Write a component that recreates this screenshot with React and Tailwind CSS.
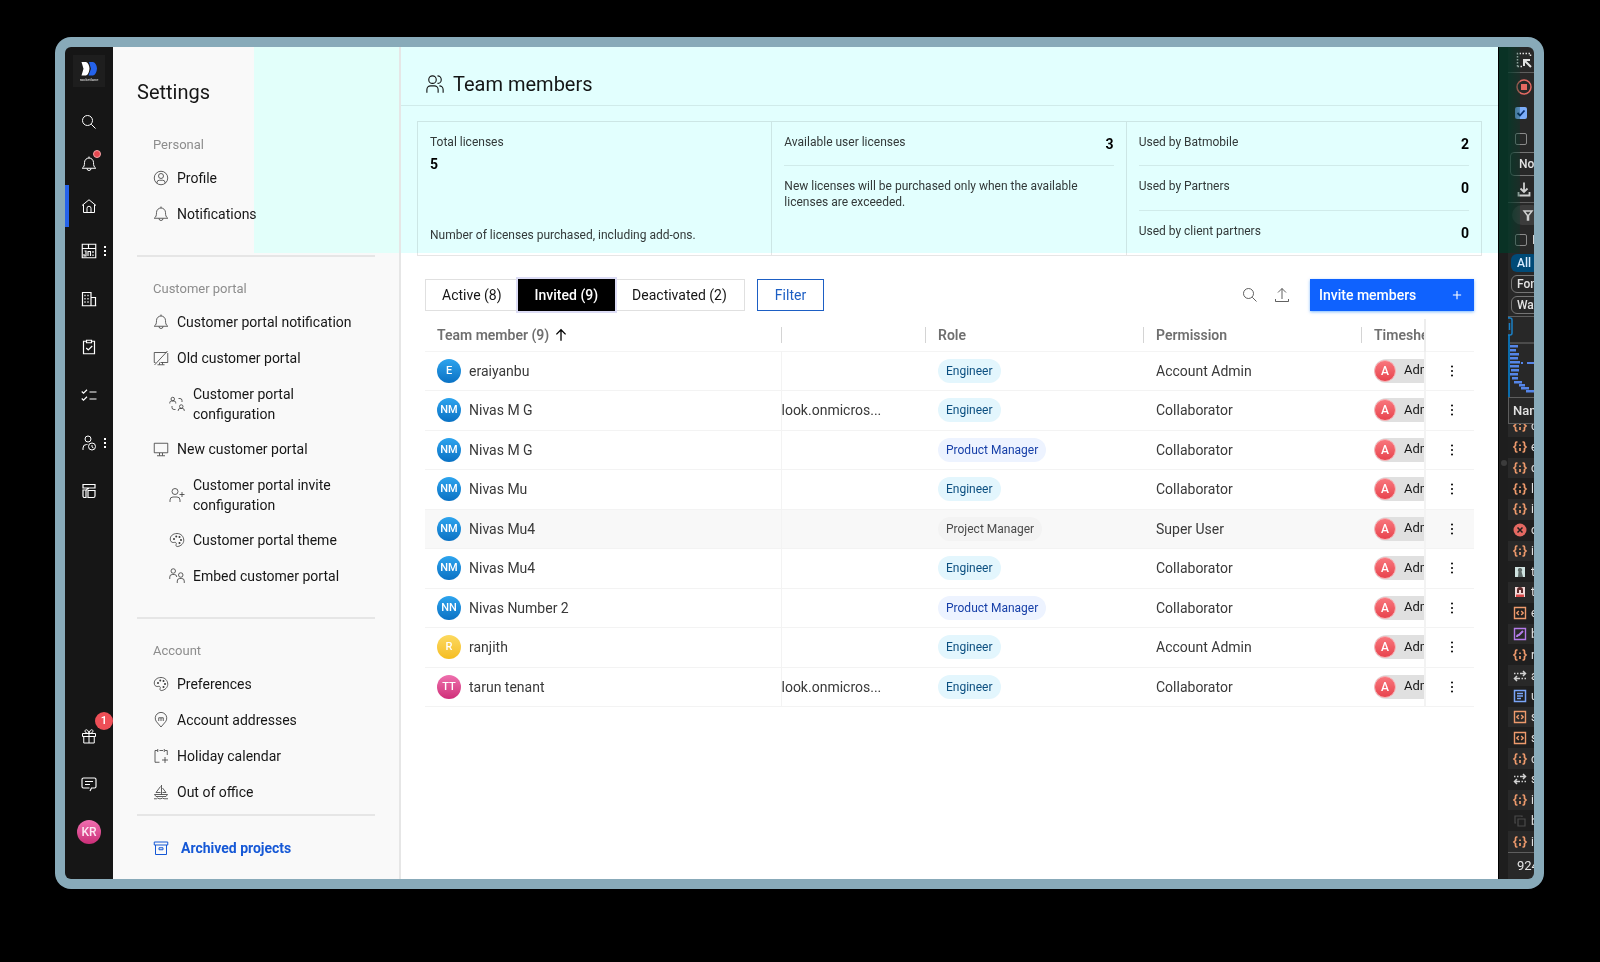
import React from "react";

/* Line icons on a 32-unit grid */
const ICONS = {
  search: <><circle cx="13" cy="13" r="10" /><path d="M20.5 20.5 29 29" /></>,
  bell: <path d="M2.500 24.500h27C26 22 25 19 25 13a9 9 0 0 0-18 0c0 6-1 9-4.500 11.500ZM12 25a4 4 0 0 0 8 0M16 1v3" />,
  home: <path d="M5 13v16h22V13M2 15 16 3.500 30 15M12 29v-8.500a4 4 0 0 1 8 0V29" />,
  dashboard: <path d="M2.500 2.500h27v27h-27ZM2.500 11h27M15 3v8M7 16h3v10H6v-4M14 26v-9h5v9M24 16v4M24 23v3" strokeWidth="2.300" />,
  building: <path d="M3 30V3h17v27M20 13h9v17M1.500 29.500h29M8 7.500v3M14 7.500v3M8 14v3M14 14v3M8 20.500v3M14 20.500v3" strokeWidth="2.400" />,
  clipboard: <path d="M11 4.500H5v25h22v-25h-6M11 2.500h10v5H11ZM10.500 18l4 4 8-8" strokeWidth="2.400" />,
  tasks: <path d="M1.500 9 5 12.500 12 5.500M1.500 23 5 26.500l7-7M17 10h14M17 24h14" strokeWidth="2.300" />,
  userTime: <><circle cx="14" cy="8" r="6" /><path d="M4 30v-4a7 7 0 0 1 7-7h2M22 20v4l3 2" /><circle cx="22" cy="23" r="7" /></>,
  template: <path d="M4 3h24v7H4ZM4 14h6v15H7a3 3 0 0 1-3-3ZM14 15h14v11a3 3 0 0 1-3 3H14ZM10 15q2-4 6-4" strokeWidth="2.400" />,
  gift: <path d="M3 11h26v6H3ZM5.500 17v13h21V17M16 11v19M16 11c-5 0-8-2-8-5s6-5 8 5c2-10 8-8 8-5s-3 5-8 5Z" />,
  chat: <path d="M18 30l3-6h6a3 3 0 0 0 3-3V7a3 3 0 0 0-3-3H5a3 3 0 0 0-3 3v14a3 3 0 0 0 3 3h12M8 11h16M8 17h10" strokeWidth="2.300" />,
  profile: <><circle cx="16" cy="16" r="13.500" /><circle cx="16" cy="12" r="5" /><path d="M8 26.500V25a4.500 4.500 0 0 1 4.500-4.500h7A4.500 4.500 0 0 1 24 25v1.500" /></>,
  screenOff: <path d="M27 5H2.500v20H5M15 25h14.500V6M29 2 3 30M13 25v4M19 25v4M9 29.500h14" />,
  screen: <path d="M2.500 4.500h27v19h-27ZM13 24v5M19 24v5M8 29.500h16" />,
  swapUsers: <path d="M7.500 2.500a3.500 3.500 0 1 1 0 7 3.500 3.500 0 0 1 0-7M1.500 15v-1.500A3.500 3.500 0 0 1 5 10h5a3.500 3.500 0 0 1 3.500 3.500V15M24.500 17.500a3.500 3.500 0 1 1 0 7 3.500 3.500 0 0 1 0-7M18.500 30v-1.500A3.500 3.500 0 0 1 22 25h5a3.500 3.500 0 0 1 3.500 3.500V30M19 5h3a4 4 0 0 1 4 4v3M13 27h-3a4 4 0 0 1-4-4v-3" />,
  userAdd: <><circle cx="12" cy="9" r="6" /><path d="M2 30v-4a6 6 0 0 1 6-6h8a6 6 0 0 1 6 6v4M21 15h10M26 10v10" /></>,
  palette: <><path d="M16 3C8 3 2.500 8 2.500 14c0 5 3 7 6 7 2.500 0 4-1 5.500.500s0 3 0 5 1.500 3 3.500 2.500C24 28 29.500 23 29.500 16.500 29.500 9 24 3 16 3Z" /><g fill="currentColor" stroke="none"><circle cx="10" cy="14" r="2" /><circle cx="14.500" cy="9" r="2" /><circle cx="21" cy="10" r="2" /><circle cx="24" cy="16" r="2" /><circle cx="21" cy="22" r="2" /></g></>,
  twoUsers: <><circle cx="8.500" cy="6" r="4.500" /><circle cx="23.500" cy="14" r="4.500" /><path d="M1.500 22v-4a5 5 0 0 1 5-5h4a5 5 0 0 1 5 5M16.500 30v-4a5 5 0 0 1 5-5h4a5 5 0 0 1 5 5v4" /></>,
  pin: <path d="M16 30 7 19.500a11.500 11.500 0 1 1 18 0ZM11.500 18v-6.500h9V18M16 12v6" />,
  calendarAdd: <path d="M13 28.500H4V5h5M13 5h7M24 5h4.500v9M9.500 2v6M22.500 2v6M24 18v12M18 24h12" />,
  boat: <path d="M2 29.500h5l2-1.500 3 1.500h4l3-1.500 3 1.500h8M3 21h26l-3 4H6ZM17 2v19M15 5 6 17h9M19 8l7 9h-7" />,
  archive: <path d="M2.500 4h27v6h-27ZM5 10v19h22V10M12 15.500h8v4h-8Z" />,
  team: <><circle cx="12" cy="9" r="6" /><path d="M3 30v-5a6 6 0 0 1 6-6h6a6 6 0 0 1 6 6v5M20 3a6 6 0 0 1 0 12M23 19a6 6 0 0 1 6 6v5" /></>,
  upload: <path d="M3 24v5h26v-5M16 24V3M8 11l8-8 8 8" />,
  plus: <path d="M16 5v22M5 16h22" />,
  arrowUp: <path d="M16 29V4M5.500 14.500 16 4l10.500 10.500" />,
  kebab: <g fill="currentColor" stroke="none"><circle cx="16" cy="7" r="2" /><circle cx="16" cy="16" r="2" /><circle cx="16" cy="25" r="2" /></g>,
};

function Icon({ name, className = "size-4", stroke = 2 }) {
  return (
    <svg viewBox="0 0 32 32" fill="none" stroke="currentColor" strokeWidth={stroke} className={`shrink-0 ${className}`} aria-hidden="true">
      {ICONS[name]}
    </svg>
  );
}

function RailDots() {
  return (
    <svg viewBox="0 0 4 12" className="absolute top-1/2 right-[6px] h-3 w-1 -translate-y-1/2 fill-white" aria-hidden="true">
      <rect x="1" y="1" width="2" height="2" /><rect x="1" y="5" width="2" height="2" /><rect x="1" y="9" width="2" height="2" />
    </svg>
  );
}

const RAIL_TOP = [
  { icon: "search", label: "Search" },
  { icon: "bell", label: "Alerts", dot: true },
  { icon: "home", label: "Home", active: true },
];
const RAIL_MID = [
  { icon: "dashboard", label: "Dashboards", more: true },
  { icon: "building", label: "Accounts" },
  { icon: "clipboard", label: "Projects" },
  { icon: "tasks", label: "Tasks" },
  { icon: "userTime", label: "People", more: true },
  { icon: "template", label: "Templates" },
];

function Rail() {
  return (
    <nav className="flex w-12 shrink-0 flex-col bg-[#161616] pt-2 text-white">
      <a href="#" className="mx-auto flex size-8 items-center justify-center bg-[#1e1e1e]">
        <svg viewBox="0 0 32 32" className="size-8" role="img" aria-label="rocketlane">
          <path d="M8.500 7H13q3 1 3.500 6.500Q16 19.500 13 20.500H8.500l2-6.750Z" fill="#fff" />
          <path d="M16 7h4q3.500 1 4 6.500-.5 6-4 7h-4.500l2.500-6.750Z" fill="#2563eb" />
          <text x="16" y="26" fontSize="4" textAnchor="middle" fill="#e5e5e5">rocketlane</text>
        </svg>
      </a>
      <div className="mt-[14px] flex flex-col">
        {RAIL_TOP.map((i) => (
          <button key={i.icon} aria-label={i.label} className={`flex h-[42px] items-center justify-center border-l-4 pr-1 ${i.active ? "border-[#2563eb]" : "border-transparent"}`}>
            <span className="relative">
              <Icon name={i.icon} />
              {i.dot && <span className="absolute -top-[6px] -right-1 size-2 rounded-full border border-[#f2a3a8] bg-[#e5484f]" />}
            </span>
          </button>
        ))}
      </div>
      <div className="flex flex-col">
        {RAIL_MID.map((i) => (
          <button key={i.icon} aria-label={i.label} className="relative flex h-12 items-center justify-center">
            <Icon name={i.icon} />
            {i.more && <RailDots />}
          </button>
        ))}
      </div>
      <div className="mt-auto flex flex-col pb-[23px]">
        <button aria-label="What's new" className="relative flex h-12 items-center justify-center">
          <Icon name="gift" />
          <span className="absolute top-0 right-0 flex size-[18px] items-center justify-center rounded-full bg-[#ee4f57] text-[11px] font-semibold">1</span>
        </button>
        <button aria-label="Messages" className="flex h-12 items-center justify-center"><Icon name="chat" /></button>
        <button className="flex h-12 items-center justify-center">
          <span className="flex size-6 items-center justify-center rounded-full bg-linear-to-b from-[#f06db0] to-[#cb2d78] text-xs font-medium text-[#fde8f2]">KR</span>
        </button>
      </div>
    </nav>
  );
}

function NavItem({ icon, label, sub, tall }) {
  return (
    <a href="#" className={`flex items-center gap-2 leading-5 text-[#161616] ${sub ? "pl-14" : "pl-10"} ${tall ? "h-[55px]" : "h-9"}`}>
      <Icon name={icon} stroke={1.600} className="size-4 text-[#393939]" />
      <span className={tall ? "w-[150px]" : ""}>{label}</span>
    </a>
  );
}

function NavGroup({ title, children }) {
  return (
    <>
      <h2 className="mb-[5px] pl-10 text-[13px] leading-5 text-[#8d8d8d]">{title}</h2>
      {children}
    </>
  );
}

const Divider = ({ className }) => <hr className={`mx-6 border-t-2 border-[#e6e6e6] ${className}`} />;

function Sidebar() {
  return (
    <aside className="relative isolate flex w-72 shrink-0 flex-col border-r-2 border-[#e6e6e6] bg-[#f9f9f9] pt-[33px] text-sm">
      <span className="absolute top-0 right-0 left-[141px] -z-10 h-[206px] bg-[#e2fffa]" />
      <h1 className="pl-6 text-xl leading-6 text-[#161616]">Settings</h1>
      <div className="pt-[31px]">
        <NavGroup title="Personal">
          <NavItem icon="profile" label="Profile" />
          <NavItem icon="bell" label="Notifications" />
        </NavGroup>
      </div>
      <Divider className="mt-[23px] mb-[22px]" />
      <NavGroup title="Customer portal">
        <NavItem icon="bell" label="Customer portal notification" />
        <NavItem icon="screenOff" label="Old customer portal" />
        <NavItem icon="swapUsers" label="Customer portal configuration" sub tall />
        <NavItem icon="screen" label="New customer portal" />
        <NavItem icon="userAdd" label="Customer portal invite configuration" sub tall />
        <NavItem icon="palette" label="Customer portal theme" sub />
        <NavItem icon="twoUsers" label="Embed customer portal" sub />
      </NavGroup>
      <Divider className="mt-[23px] mb-[22px]" />
      <NavGroup title="Account">
        <NavItem icon="palette" label="Preferences" />
        <NavItem icon="pin" label="Account addresses" />
        <NavItem icon="calendarAdd" label="Holiday calendar" />
        <NavItem icon="boat" label="Out of office" />
      </NavGroup>
      <Divider className="mt-1 mb-[22px]" />
      <a href="#" className="flex items-center gap-3 pl-10 leading-5 font-bold text-[#1558d6]">
        <Icon name="archive" /> Archived projects
      </a>
    </aside>
  );
}

function StatRow({ label, value, last }) {
  return (
    <div className={`flex items-center justify-between ${last ? "" : "border-b border-[#ebebeb]"}`}>
      <span className="pb-1 text-[#393939]">{label}</span>
      <strong className="text-sm font-bold text-black">{value}</strong>
    </div>
  );
}

function Stats() {
  return (
    <section className="mx-4 mt-[15px] grid h-[135px] grid-cols-3 divide-x divide-[#e6e6e6] border border-[#e6e6e6] text-xs">
      <div className="flex flex-col px-3 pt-3 pb-3 text-[#393939]">
        <span className="leading-4">Total licenses</span>
        <strong className="mt-1 text-sm leading-5 font-bold text-black">5</strong>
        <span className="mt-auto leading-4">Number of licenses purchased, including add-ons.</span>
      </div>
      <div className="grid grid-rows-3 px-3">
        <StatRow label="Available user licenses" value="3" />
        <p className="row-span-2 max-w-[310px] pt-3 leading-4 text-[#393939]">New licenses will be purchased only when the available licenses are exceeded.</p>
      </div>
      <div className="grid grid-rows-3 px-3">
        <StatRow label="Used by Batmobile" value="2" />
        <StatRow label="Used by Partners" value="0" />
        <StatRow label="Used by client partners" value="0" last />
      </div>
    </section>
  );
}

const BLUE = "from-[#2da4ee] to-[#0a72c4]";
const MEMBERS = [
  ["E", BLUE, "eraiyanbu", "", "Engineer", "Account Admin"],
  ["NM", BLUE, "Nivas M G", "look.onmicros...", "Engineer", "Collaborator"],
  ["NM", BLUE, "Nivas M G", "", "Product Manager", "Collaborator"],
  ["NM", BLUE, "Nivas Mu", "", "Engineer", "Collaborator"],
  ["NM", BLUE, "Nivas Mu4", "", "Project Manager", "Super User"],
  ["NM", BLUE, "Nivas Mu4", "", "Engineer", "Collaborator"],
  ["NN", BLUE, "Nivas Number 2", "", "Product Manager", "Collaborator"],
  ["R", "from-[#fcd95e] to-[#f5bd1c]", "ranjith", "", "Engineer", "Account Admin"],
  ["TT", "from-[#ee6fae] to-[#cf2c79]", "tarun tenant", "look.onmicros...", "Engineer", "Collaborator"],
];
const ROLE_STYLE = {
  Engineer: "bg-[#e3f6fd] text-[#0b4f80]",
  "Product Manager": "bg-[#edf3ff] text-[#163fa8]",
  "Project Manager": "bg-[#f3f3f3] text-[#4a4a4a]",
};

function HeadCell({ children, bar = true }) {
  return (
    <th className="h-8 p-0 text-left font-semibold text-[#6f6f6f]">
      <div className={`h-4 overflow-hidden pl-3 leading-4 whitespace-nowrap ${bar ? "border-l border-[#d4d4d4]" : ""}`}>{children}</div>
    </th>
  );
}

function Members() {
  return (
    <div className="mx-6 mt-2">
      <table className="h-[388px] w-full table-fixed border-collapse text-sm text-[#393939]">
        <colgroup>
          <col /><col className="w-36" /><col className="w-[218px]" /><col className="w-[218px]" /><col className="w-16" /><col className="w-[49px]" />
        </colgroup>
        <thead>
          <tr className="h-8 border-b border-[#f4f4f4]">
            <HeadCell bar={false}>
              <button className="flex items-center gap-1 leading-4">Team member (9) <Icon name="arrowUp" stroke={3} className="size-4 p-px text-black" /></button>
            </HeadCell>
            <HeadCell /><HeadCell>Role</HeadCell><HeadCell>Permission</HeadCell><HeadCell>Timesheet</HeadCell>
            <th className="border-l-2 border-[#ededed]" aria-label="Actions" />
          </tr>
        </thead>
        <tbody>
          {MEMBERS.map(([initials, tone, name, email, role, permission], i) => (
            <tr key={i} className={`h-[39px] border-b border-[#f3f3f3] ${role === "Project Manager" ? "bg-[#f8f8f8]" : ""}`}>
              <td className="p-0 pl-3">
                <span className="flex items-center gap-2">
                  <span className={`flex size-6 items-center justify-center rounded-full bg-linear-to-b text-[11px] font-medium text-white ${tone}`}>{initials}</span>
                  {name}
                </span>
              </td>
              <td className="border-l border-[#f3f3f3] p-0">{email}</td>
              <td className="p-0 pl-[13px]">
                <span className={`inline-block h-6 rounded-full px-2 align-middle text-xs leading-6 ${ROLE_STYLE[role]}`}>{role}</span>
              </td>
              <td className="p-0 pl-[13px]">{permission}</td>
              <td className="p-0 pl-[13px]">
                <span className="flex h-6 items-center gap-2 overflow-hidden rounded-l-full bg-[#e0e0e0] text-[13px] text-[#161616]">
                  <span className="flex size-[22px] shrink-0 items-center justify-center rounded-full border border-[#f6b5b8] bg-linear-to-b from-[#f8757c] to-[#e8434e] text-xs font-medium text-white">A</span>
                  Adm
                </span>
              </td>
              <td className="border-l-2 border-[#f3f3f3] p-0 pl-1">
                <button aria-label={`Actions for ${name}`} className="flex h-8 w-full items-center justify-center text-black">
                  <Icon name="kebab" />
                </button>
              </td>
            </tr>
          ))}
        </tbody>
      </table>
    </div>
  );
}

function Main() {
  return (
    <main className="relative min-w-0 flex-1 bg-white text-sm">
      <header className="flex h-[59px] items-center gap-2 border-b border-[#ebebeb] pt-[15px] pl-6 text-xl text-[#161616]">
        <Icon name="team" className="size-5" stroke={1.800} /> <h2>Team members</h2>
      </header>
      <Stats />
      <div className="mx-6 mt-[23px] flex items-center leading-5">
        <div className="flex h-8 border border-[#e0e0e0] text-[#161616]">
          <button className="px-4">Active (8)</button>
          <button className="-my-px bg-black px-[17px] font-medium text-white outline-2 outline-[#dcdcf5]">Invited (9)</button>
          <button className="px-[17px]">Deactivated (2)</button>
        </div>
        <button className="ml-3 h-8 border border-[#1d5fc4] px-[17px] text-[#1d5fc4]">Filter</button>
        <div className="ml-auto flex items-center gap-4 text-[#393939]">
          <button aria-label="Search members"><Icon name="search" stroke={1.600} /></button>
          <button aria-label="Export"><Icon name="upload" stroke={1.600} /></button>
          <button className="ml-1 flex h-8 w-[164px] items-center justify-between bg-[#0f62fe] px-[9px] font-medium text-white shadow-sm shadow-blue-300">
            Invite members <Icon name="plus" className="size-4 p-[2px]" stroke={3} />
          </button>
        </div>
      </div>
      <Members />
      <span className="pointer-events-none absolute inset-x-0 top-0 h-[206px] bg-[#e2fffe] mix-blend-multiply" />
    </main>
  );
}

/* Network panel glyphs on a 16-unit grid */
const GLYPHS = {
  js: <g stroke="#ee9a6c" strokeWidth="1.700"><path d="M5.500 3H4.500Q3.500 3 3.500 4.500V6.500L2 8l1.500 1.500v2Q3.500 13 4.500 13h1M10.500 3h1q1 0 1 1.500v2L14 8l-1.500 1.500v2q0 1.500-1 1.500h-1" /><path d="M8 5.500v1.600M8 9v3" /></g>,
  error: <><circle cx="8" cy="8" r="6.500" fill="#e46962" stroke="none" /><path d="m5.500 5.500 5 5m0-5-5 5" stroke="#1f1f1f" strokeWidth="1.500" /></>,
  photo: <><path d="M3 3h10v10H3Z" fill="#cfe3e0" stroke="none" /><path d="M8 4a2 2 0 0 1 1.500 3.500L11 13H6l.5-5.500A2 2 0 0 1 8 4Z" fill="#5f6b69" stroke="none" /></>,
  photoRed: <><path d="M3 3h10v10H3Z" fill="#f4d9d9" stroke="none" /><path d="M5 9V6a3 3 0 0 1 6 0v3H9V6H7v3Z" fill="#5b2b2b" stroke="none" /><path d="M4 10.500h8V13H4Z" fill="#d94a4a" stroke="none" /></>,
  code: <g stroke="#ee9a6c" strokeWidth="1.400"><path d="M2.500 2.500h11v11h-11Z" /><path d="m6.800 6-2 2 2 2M9.200 6l2 2-2 2" /></g>,
  style: <g stroke="#b57bea" strokeWidth="1.400"><path d="M2.500 2.500h11v11h-11Z" /><path d="M5 11q0-2 2-2l4-4" strokeWidth="2" /></g>,
  swap: <g stroke="#d0d0d0" strokeWidth="1.500"><path d="M2 5.500h1.500M5 5.500h1.500M8 5.500h5M11 3l2.500 2.500L11 8M14 10.500h-1.500M11 10.500H9.500M8 10.500H3M5 8l-2.500 2.500L5 13" /></g>,
  doc: <g stroke="#7aa5f7" strokeWidth="1.500"><path d="M2.500 2.500h11v11h-11Z" /><path d="M5 5.500h6M5 8h6M5 10.500h4" /></g>,
  copy: <g stroke="#4a4a4a" strokeWidth="1.200"><path d="M6 6h7v7H6ZM4 10H3V3h7v1" /></g>,
};
const REQUESTS = [
  ["js", "d"], ["js", "e"], ["js", "c"], ["js", "l"], ["js", "i"], ["error", "c"], ["js", "i"],
  ["photo", "t"], ["photoRed", "t"], ["code", "e"], ["style", "b"], ["js", "r"], ["swap", "a"], ["doc", "u"],
  ["code", "s"], ["code", "s"], ["js", "d"], ["swap", "s"], ["js", "i"], ["copy", "b"], ["js", "i"],
];
const BARS = [[2, 4, 8], [2, 8, 6], [2, 12, 9], [2, 16, 8], [2, 20, 10], [2, 24, 9], [3, 28, 8], [2, 32, 8], [4, 36, 6], [6, 40, 8], [11, 43, 6], [13, 46, 8], [18, 49, 8]];

function DevTools() {
  return (
    <>
      <div className="relative flex w-[10px] shrink-0 items-center justify-center border-l border-black bg-[#1e1e1e]">
        <span className="size-[6px] rounded-full bg-[#3c3c3c]" />
        <span className="absolute inset-x-0 top-0 h-[206px] bg-[#003a28]/70" />
      </div>
      <aside className="relative flex w-[26px] shrink-0 flex-col overflow-hidden bg-[#282828] text-xs whitespace-nowrap text-[#e3e3e3]">
        <div className="flex h-[26px] shrink-0 items-center border-b border-[#5e5e5e] pl-2">
          <svg viewBox="0 0 16 16" className="size-4 shrink-0" fill="none" stroke="#e3e3e3" strokeWidth="1.500" aria-hidden="true">
            <path d="M1.500 14.500v-13h13v4M1.500 14.500h5" strokeDasharray="1.500 1.500" /><path d="M15 15 8 8M8 14V8h6" strokeWidth="2" />
          </svg>
        </div>
        <button aria-label="Stop recording" className="flex h-[27px] shrink-0 items-center pl-2">
          <svg viewBox="0 0 16 16" className="size-4" aria-hidden="true"><circle cx="8" cy="8" r="7" fill="none" stroke="#e46962" strokeWidth="1.500" /><rect x="5" y="5" width="6" height="6" fill="#e46962" /></svg>
        </button>
        <label className="flex h-[26px] shrink-0 items-center pl-[7px]">
          <input type="checkbox" defaultChecked aria-label="Preserve log" className="absolute size-3 appearance-none rounded-xs bg-[#7cacf8]" />
          <svg viewBox="0 0 12 12" className="pointer-events-none relative size-3" fill="none" stroke="#062e6f" strokeWidth="1.800" aria-hidden="true"><path d="m2.500 6 2.500 2.500 4.500-5" /></svg>
        </label>
        <label className="flex h-[26px] shrink-0 items-center pl-[7px]"><input type="checkbox" aria-label="Disable cache" className="size-3 shrink-0 appearance-none rounded-xs border border-[#8a8a8a]" /></label>
        <button className="-mr-2 ml-[2px] h-6 shrink-0 rounded-sm border border-[#757575] pl-2 text-left font-medium">No throttling</button>
        <button aria-label="Export requests" className="flex h-[27px] shrink-0 items-center border-b border-[#5e5e5e] pl-2">
          <svg viewBox="0 0 16 16" className="size-4" fill="none" stroke="#d0d0d0" strokeWidth="1.800" aria-hidden="true"><path d="M8 1.500v9M4.500 7.500 8 11l3.500-3.500M2.500 11v3.500h11V11" /></svg>
        </button>
        <button aria-label="Filter requests" className="mt-[2px] -mr-2 ml-1 flex h-5 shrink-0 items-center rounded-full bg-[#3c3c3c] pl-[10px]">
          <svg viewBox="0 0 12 12" className="size-3" fill="none" stroke="#d0d0d0" strokeWidth="1.500" aria-hidden="true"><path d="M2 2h8L6.500 6.500V11h-1V6.500Z" /></svg>
        </button>
        <label className="flex h-[29px] shrink-0 items-center gap-[5px] pl-[7px]"><input type="checkbox" className="size-3 shrink-0 appearance-none rounded-xs border border-[#8a8a8a]" />Invert</label>
        <div className="flex shrink-0 flex-col gap-[3px] border-b border-[#5e5e5e] pb-[2px] pl-[3px] font-medium">
          <button className="-mr-1 h-[18px] rounded-md bg-[#004a77] pl-[6px] text-left leading-[18px] text-[#d8ecff]">All</button>
          <button className="-mr-2 h-[18px] rounded-md border border-[#757575] pl-[5px] text-left leading-4">Font</button>
          <button className="-mr-2 h-[18px] rounded-md border border-[#757575] pl-[5px] text-left leading-4">Wasm</button>
        </div>
        <svg viewBox="0 0 26 80" className="h-20 w-[26px] shrink-0 bg-[#282828]" aria-hidden="true">
          <path d="M0 26h26" stroke="#6e6e6e" />
          <path d="M1 0v80" stroke="#0b6cab" strokeWidth="2" />
          <rect x="-3" y="1" width="7" height="17" rx="2" fill="#282828" stroke="#1a7fc4" strokeWidth="1.500" />
          <path d="M1.500 6v7" stroke="#1a7fc4" strokeWidth="1.500" />
          {BARS.map(([x, y, w], i) => <rect key={i} x={x} y={y + 24} width={w} height="2.500" fill="#5585e8" />)}
          <path d="M13 46h2M19 46h7" stroke="#5585e8" strokeWidth="2" />
        </svg>
        <div className="flex h-[27px] shrink-0 items-center border-y border-l border-[#5e5e5e] pl-1 text-[13px] font-medium">Name</div>
        <div className="min-h-0 flex-1 overflow-hidden">
          <ul className="-mt-2 grid h-[calc(100%+8px)] auto-rows-fr">
            {REQUESTS.map(([glyph, text], i) => (
              <li key={i} className={`flex min-h-0 items-center gap-[3px] pl-1 ${i % 2 ? "bg-[#1f1f1f]" : "bg-[#292929]"}`}>
                <svg viewBox="0 0 16 16" className="size-4 shrink-0" fill="none" aria-hidden="true">{GLYPHS[glyph]}</svg>
                {text}
              </li>
            ))}
          </ul>
        </div>
        <div className="flex h-[27px] shrink-0 items-center border-t border-[#5e5e5e] pl-[9px] text-[13px]">924</div>
        <span className="pointer-events-none absolute top-0 left-0 h-[206px] w-3 bg-linear-to-r from-[#003a28]/70 to-[#003a28]/30" />
      </aside>
    </>
  );
}

export default function App() {
  return (
    <div className="flex min-h-screen flex-col bg-black pt-[37px] pr-14 pb-[73px] pl-[55px] font-[Roboto,sans-serif]">
      <div className="flex flex-1 rounded-2xl bg-[#88aab9] p-[10px]">
        <div className="flex min-w-0 flex-1 overflow-hidden rounded-md">
          <Rail />
          <Sidebar />
          <Main />
          <DevTools />
        </div>
      </div>
    </div>
  );
}
